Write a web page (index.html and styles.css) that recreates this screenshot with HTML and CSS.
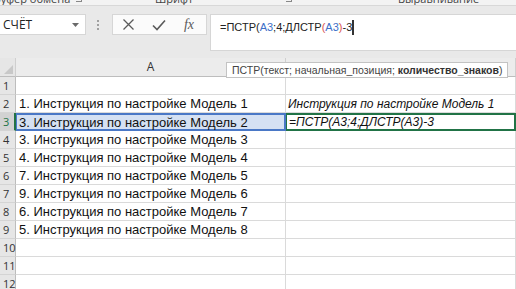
FILE: index.html
```html
<!DOCTYPE html>
<html lang="ru">
<head>
    <meta charset="UTF-8">
    <meta name="viewport" content="width=device-width, initial-scale=1.0">
    <title>Excel ПСТР</title>
    <link rel="stylesheet" href="styles.css">
</head>
<body>
    <div class="ribbon-tail">
        <span class="group-label label-clip">Буфер обмена</span>
        <span class="launcher launcher-clip"></span>
        <span class="group-label label-font">Шрифт</span>
        <span class="launcher launcher-font"></span>
        <span class="group-label label-align">Выравнивание</span>
    </div>

    <div class="formula-bar">
        <div class="name-box">
            <span>СЧЁТ</span>
            <svg class="name-arrow" width="7" height="4" viewBox="0 0 7 4"><path d="M0 0 L7 0 L3.5 4 Z" fill="#6a6a6a"/></svg>
        </div>
        <div class="grip">
            <i></i><i></i><i></i>
        </div>
        <div class="fx-buttons">
            <svg width="13" height="13" viewBox="0 0 13 13"><path d="M1.5 1.5 L11.5 11.5 M11.5 1.5 L1.5 11.5" stroke="#5a5a5a" stroke-width="1.3" fill="none"/></svg>
            <svg width="14" height="12" viewBox="0 0 14 12"><path d="M1 6.5 L5 10.5 L13 1.5" stroke="#5a5a5a" stroke-width="1.6" fill="none"/></svg>
            <span class="fx">fx</span>
        </div>
        <div class="formula-input">
            <span>=ПСТР(</span><span class="ref">A3</span><span>;4;ДЛСТР</span><span class="paren">(</span><span class="ref2">A3</span><span class="paren">)</span><span>-3</span><span class="caret"></span>
        </div>
    </div>

    <div class="sheet">
        <div class="corner"><span class="corner-tri"></span></div>
        <div class="col-head">A</div>
        <div class="col-head"></div>

        <div class="row-head">1</div>
        <div class="cell"></div>
        <div class="cell"></div>

        <div class="row-head">2</div>
        <div class="cell">1. Инструкция по настройке Модель 1</div>
        <div class="cell cell-b">Инструкция по настройке Модель 1</div>

        <div class="row-head row-active">3</div>
        <div class="cell ref-cell">3. Инструкция по настройке Модель 2</div>
        <div class="cell cell-b edit-cell">=ПСТР(A3;4;ДЛСТР(A3)-3</div>

        <div class="row-head">4</div>
        <div class="cell">3. Инструкция по настройке Модель 3</div>
        <div class="cell"></div>

        <div class="row-head">5</div>
        <div class="cell">4. Инструкция по настройке Модель 4</div>
        <div class="cell"></div>

        <div class="row-head">6</div>
        <div class="cell">7. Инструкция по настройке Модель 5</div>
        <div class="cell"></div>

        <div class="row-head">7</div>
        <div class="cell">9. Инструкция по настройке Модель 6</div>
        <div class="cell"></div>

        <div class="row-head">8</div>
        <div class="cell">6. Инструкция по настройке Модель 7</div>
        <div class="cell"></div>

        <div class="row-head">9</div>
        <div class="cell">5. Инструкция по настройке Модель 8</div>
        <div class="cell"></div>

        <div class="row-head">10</div>
        <div class="cell"></div>
        <div class="cell"></div>

        <div class="row-head">11</div>
        <div class="cell"></div>
        <div class="cell"></div>

        <div class="row-head">12</div>
        <div class="cell"></div>
        <div class="cell"></div>
    </div>

    <div class="tooltip">ПСТР(текст; начальная_позиция; <b>количество_знаков</b>)</div>
</body>
</html>
```

FILE: styles.css
```css
* {
    box-sizing: border-box;
}

body {
    margin: 0;
    width: 516px;
    height: 289px;
    overflow: hidden;
    background-color: #ffffff;
    font-family: "Open Sans", "Noto Sans", sans-serif;
    position: relative;
}

.ribbon-tail {
    position: relative;
    height: 6px;
    background-color: #f3f3f3;
    border-bottom: 1px solid #d8d8d8;
    overflow: hidden;
}

.group-label {
    position: absolute;
    top: -7px;
    font-size: 11px;
    line-height: 12px;
    color: #444444;
}

.label-clip {
    left: -6px;
}

.label-font {
    left: 155px;
}

.label-align {
    left: 398px;
}

.launcher {
    position: absolute;
    top: -4px;
    width: 6px;
    height: 6px;
    border-right: 1px solid #888;
    border-bottom: 1px solid #888;
}

.launcher-clip {
    left: 76px;
}

.launcher-font {
    left: 286px;
}

.formula-bar {
    display: flex;
    align-items: flex-start;
    height: 52px;
    padding-top: 8px;
    background-color: #e9e9e9;
}

.name-box {
    display: flex;
    align-items: center;
    justify-content: space-between;
    width: 86px;
    height: 21px;
    padding: 0 6px 0 3px;
    background-color: #ffffff;
    border: 1px solid #d6d6d6;
    border-left: none;
    font-size: 12px;
    color: #222;
}

.name-arrow {
    margin-top: 1px;
}

.grip {
    display: flex;
    flex-direction: column;
    gap: 2px;
    width: 26px;
    padding: 6px 0 0 11px;
}

.grip i {
    display: block;
    width: 2px;
    height: 2px;
    background-color: #a0a0a0;
}

.fx-buttons {
    display: flex;
    align-items: center;
    justify-content: space-between;
    width: 95px;
    height: 21px;
    padding: 0 12px 0 9px;
    background-color: #fbfbfb;
    border: 1px solid #d6d6d6;
}

.fx {
    font-family: "Liberation Serif", serif;
    font-style: italic;
    font-size: 14px;
    color: #5a5a5a;
}

.formula-input {
    display: flex;
    align-items: flex-start;
    margin-left: 3px;
    flex: 1;
    height: 37px;
    padding: 3px 0 0 9px;
    background-color: #ffffff;
    border: 1px solid #d6d6d6;
    border-right: none;
    font-family: "Liberation Sans", Arial, sans-serif;
    font-size: 11px;
    line-height: 18px;
    color: #222;
    white-space: pre;
}

.ref,
.ref2 {
    color: #3d6fc8;
}

.paren {
    color: #d9534f;
}

.caret {
    width: 2px;
    height: 15px;
    margin-top: 2px;
    background-color: #333;
}

.sheet {
    display: grid;
    grid-template-columns: 16px 270px 230px;
    grid-template-rows: 19px;
    grid-auto-rows: 18px;
    font-family: "Liberation Sans", Arial, sans-serif;
}

.corner {
    position: relative;
    background-color: #e6e6e6;
    border-right: 1px solid #cfcfcf;
    border-bottom: 1px solid #bdbdbd;
}

.corner-tri {
    position: absolute;
    right: 2px;
    bottom: 2px;
    width: 0;
    height: 0;
    border-left: 9px solid transparent;
    border-bottom: 9px solid #c8c8c8;
}

.col-head {
    background-color: #ececec;
    border-right: 1px solid #cfcfcf;
    border-bottom: 1px solid #bdbdbd;
    text-align: center;
    font-family: "Open Sans", sans-serif;
    font-size: 12px;
    line-height: 18px;
    color: #333;
}

.row-head {
    background-color: #e6e6e6;
    border-right: 1px solid #bdbdbd;
    border-bottom: 1px solid #d4d4d4;
    padding-left: 3px;
    font-family: "Open Sans", sans-serif;
    font-size: 11px;
    line-height: 18px;
    color: #333;
}

.row-active {
    color: #217346;
    background-color: #d2d2d2;
    border-right: 2px solid #217346;
}

.cell {
    border-right: 1px solid #dadada;
    border-bottom: 1px solid #dadada;
    padding-left: 3px;
    font-size: 13px;
    line-height: 18px;
    color: #111;
    white-space: nowrap;
    overflow: visible;
}

.cell-b {
    padding-left: 2px;
    font-size: 12px;
    font-style: italic;
}

.ref-cell {
    position: relative;
    background-color: #d5e1f3;
    border: 2px solid #4a78c6;
    border-left-width: 1px;
    line-height: 15px;
    padding-left: 2px;
}

.edit-cell {
    border: 2px solid #217346;
    border-left-width: 1px;
    line-height: 15px;
}

.tooltip {
    position: absolute;
    left: 226px;
    top: 62px;
    height: 16px;
    padding: 0 5px;
    background-color: #ffffff;
    border: 1px solid #c3c3c3;
    font-family: "Liberation Sans", Arial, sans-serif;
    font-size: 10.5px;
    line-height: 14px;
    color: #444;
    white-space: nowrap;
}

.tooltip b {
    color: #333;
}
```
